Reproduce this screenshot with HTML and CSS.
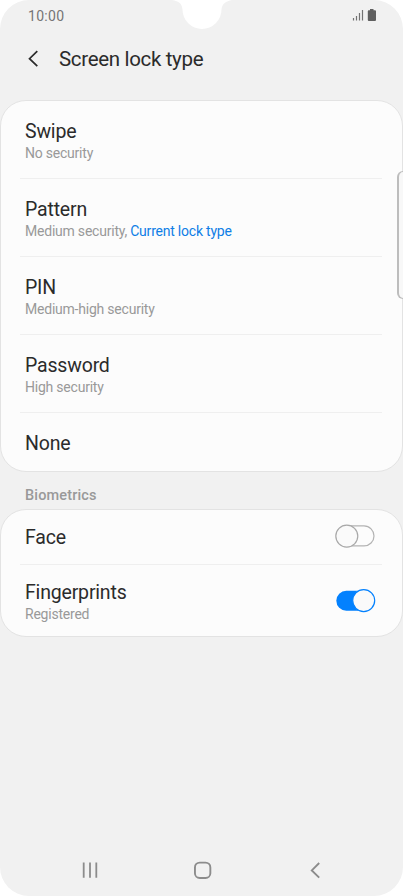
FILE: index.html
```html
<!DOCTYPE html>
<html lang="en">
<head>
<meta charset="utf-8">
<title>Screen lock type</title>
<link rel="stylesheet" href="styles.css">
</head>
<body>
<div class="phone">
  <svg class="notch" width="64" height="30" viewBox="0 0 64 30"><path d="M0 0C7 1 10 4 10.500 9.500A19.500 19.500 0 0 0 49.500 9.500C50 4 54 1 60 0Z" fill="#fff"/></svg>
  <header class="status">
    <span class="time">10:00</span>
    <svg width="26" height="14" viewBox="0 0 26 14">
      <path d="M1.500 10v2.500M4.500 8v4.500M7.500 5v7.500M10.500 2v10.500" stroke="#737373" stroke-width="1.200"/>
      <path d="M18 1h3.500v1.200h1.500q1 0 1 1v8.800q0 1-1 1h-6.200q-1 0-1-1v-8.800q0-1 1-1h1.200z" fill="#606060"/>
    </svg>
  </header>
  <div class="titlebar">
    <svg width="12" height="18" viewBox="0 0 12 18"><path d="M10.300 1.200L2.500 8.700l7.800 7.500" fill="none" stroke="#2b2b2b" stroke-width="1.700"/></svg>
    <h1>Screen lock type</h1>
  </div>
  <main>
    <section class="card">
      <div class="row"><div><div class="name">Swipe</div><div class="sub">No security</div></div></div>
      <div class="row"><div><div class="name">Pattern</div><div class="sub">Medium security, <span class="current">Current lock type</span></div></div></div>
      <div class="row"><div><div class="name">PIN</div><div class="sub">Medium-high security</div></div></div>
      <div class="row"><div><div class="name">Password</div><div class="sub">High security</div></div></div>
      <div class="row none"><div class="name">None</div></div>
    </section>
    <h2>Biometrics</h2>
    <section class="card">
      <div class="row face"><div class="name">Face</div>
        <svg width="42" height="24" viewBox="0 0 42 24"><rect x="3" y="1.900" width="37" height="20" rx="10" fill="#fcfcfc" stroke="#b3b3b3" stroke-width="1.200"/><circle cx="12.800" cy="12.100" r="11" fill="#fafafa" stroke="#a8a8a8" stroke-width="1.200"/></svg>
      </div>
      <div class="row finger"><div><div class="name">Fingerprints</div><div class="sub">Registered</div></div>
        <svg width="42" height="24" viewBox="0 0 42 24"><rect x="2.300" y="1.700" width="38" height="20" rx="10" fill="#0381fe"/><circle cx="29.700" cy="11.600" r="11" fill="#fafafa" stroke="#0381fe" stroke-width="1.200"/></svg>
      </div>
    </section>
  </main>
  <div class="edge"></div>
  <nav>
    <svg width="18" height="18" viewBox="0 0 18 18"><path d="M2.700 1.500v15.200M9 1.500v15.200M15.300 1.500v15.200" stroke="#8c8c8c" stroke-width="1.800"/></svg>
    <svg width="18" height="18" viewBox="0 0 18 18"><rect x="0.950" y="1.600" width="15.400" height="15.400" rx="4.800" fill="none" stroke="#8c8c8c" stroke-width="1.900"/></svg>
    <svg width="18" height="18" viewBox="0 0 18 18"><path d="M13.200 2L5.800 9.400l7.400 7.200" fill="none" stroke="#8c8c8c" stroke-width="1.900"/></svg>
  </nav>
</div>
</body>
</html>
```
FILE: styles.css
```css
* { box-sizing: border-box; }
body { margin: 0; background: #fff; font-family: Roboto, sans-serif; color: #2b2b2b; }
svg { display: block; flex: none; }
.phone { position: relative; width: 403px; height: 896px; overflow: hidden; border-radius: 29px; background: #f1f1f1; display: flex; flex-direction: column; }
.notch { position: absolute; left: 172px; top: 0; }
.status { height: 32px; padding: 0 25px 0 28px; display: flex; align-items: center; justify-content: space-between; }
.status svg { margin-top: -2px; }
.time { font-size: 14px; letter-spacing: 0.300px; color: #757575; }
.titlebar { height: 68px; padding: 0 0 14px 27px; display: flex; align-items: center; gap: 20px; }
h1 { margin: 0; font-size: 20.500px; line-height: 24px; font-weight: 400; letter-spacing: -0.330px; }
.card { border: 1px solid #e3e3e3; border-radius: 26px; background: #fcfcfc; padding: 0 20px 0 19px; }
.row { height: 78px; padding: 19px 5px 0; border-bottom: 1px solid #efefef; display: flex; justify-content: space-between; }
.row:last-child { border-bottom: 0; }
.card .none { height: 58px; }
.name { font-size: 19.500px; line-height: 24px; letter-spacing: -0.180px; }
.sub { font-size: 14px; line-height: 18px; letter-spacing: -0.220px; color: #999; }
.current { color: #0f7ee6; }
h2 { height: 37px; margin: 0; padding: 14px 25px 0; font-size: 14.500px; line-height: 19px; font-weight: 500; letter-spacing: 0.150px; color: #999; }
.card .face { height: 55px; padding-top: 16px; padding-right: 6px; }
.card .finger { height: 71px; padding-top: 16px; padding-right: 6px; }
.face svg { margin-top: -2px; }
.finger svg { margin-top: 8px; }
.edge { position: absolute; left: 397px; top: 171px; width: 10px; height: 128px; border: 2px solid #bdbdbd; border-width: 1px 0 1px 2px; border-radius: 6px 0 0 6px; background: #f8f8f8; }
nav { margin-top: auto; height: 52px; padding: 0 79px 0 81px; display: flex; align-items: center; justify-content: space-between; }
```
